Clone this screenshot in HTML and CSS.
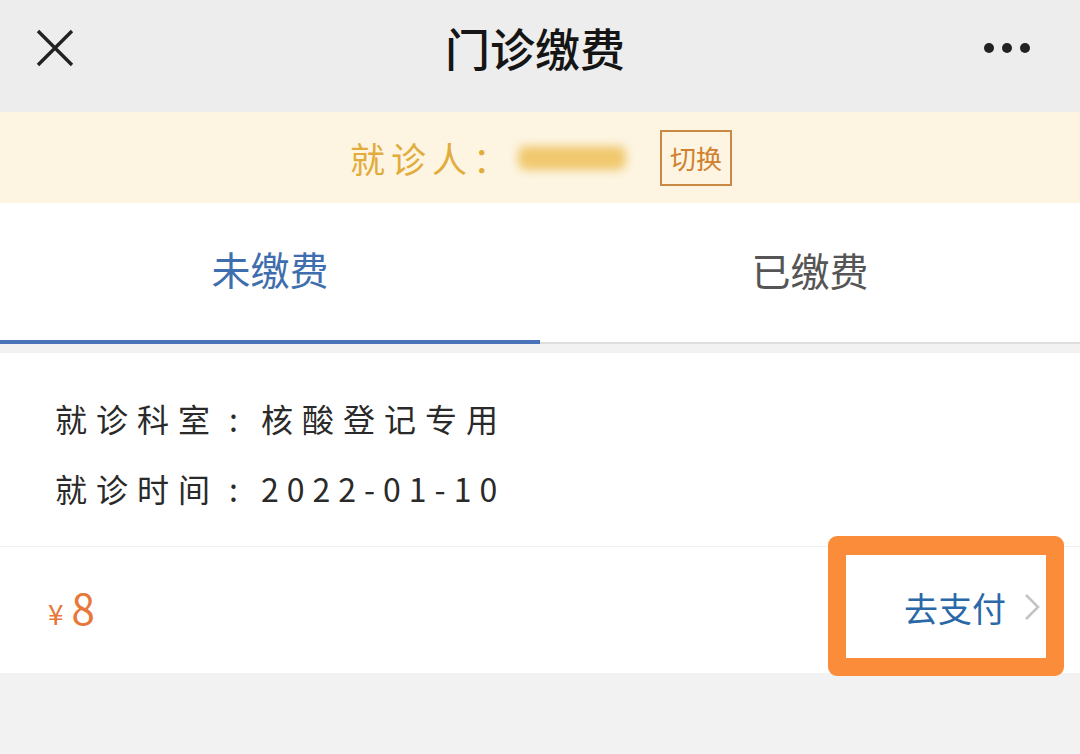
FILE: index.html
```html
<!DOCTYPE html>
<html lang="zh-CN">
<head>
  <meta charset="UTF-8" />
  <title>门诊缴费</title>
  <link rel="stylesheet" href="styles.css">
</head>
<body>

  <!-- top bar -->
  <div class="topbar">
    <svg class="close" width="38" height="38" viewBox="0 0 38 38">
      <path d="M2 2 L36 36 M36 2 L2 36" stroke="#222" stroke-width="3.4" fill="none" />
    </svg>
    <div class="title">门诊缴费</div>
    <div class="more"><span></span><span></span><span></span></div>
  </div>

  <!-- patient -->
  <div class="patient">
    <span class="patient-label">就诊人：</span>
    <span class="patient-name"></span>
    <span class="switch">切换</span>
  </div>

  <!-- tabs -->
  <div class="tabs">
    <div class="tab active">未缴费</div>
    <div class="tab">已缴费</div>
  </div>

  <div class="card">
    <div class="info">
      <div class="row">就诊科室<span class="colon">:</span>核酸登记专用</div>
      <div class="row">就诊时间<span class="colon">:</span><span class="date">2022-01-10</span></div>
    </div>
    <div class="bottom">
      <div class="price"><span class="yen">¥</span>8</div>
      <div class="pay">
        去支付
        <svg width="20" height="30" viewBox="0 0 20 30">
          <path d="M4 3 L16 15 L4 27" stroke="#c4c4c4" stroke-width="2.6" fill="none" />
        </svg>
      </div>
      <div class="mark"></div>
    </div>
  </div>

</body>
</html>
```

FILE: styles.css
```css
body {
  margin: 0;
  font-family: "Noto Sans CJK SC", "Noto Sans", sans-serif;
  background-color: #f2f2f2;
  color: #222;
  width: 1080px;
  height: 754px;
  overflow: hidden;
}

.topbar {
  height: 112px;
  background: #ededed;
  display: flex;
  align-items: center;
  justify-content: space-between;
  padding: 0 50px 0 36px;
  box-sizing: border-box;
}

.close {
  margin-top: -16px;
}

.title {
  font-size: 45px;
  font-weight: 500;
  color: #151515;
  margin-top: -18px;
  margin-left: 12px;
}

.more {
  display: flex;
  gap: 8px;
  margin-top: -16px;
}

.more span {
  width: 10px;
  height: 10px;
  border-radius: 50%;
  background: #222;
}

.patient {
  height: 91px;
  background: #fdf5e2;
  display: flex;
  align-items: center;
  justify-content: center;
  padding-left: 2px;
}

.patient-label {
  font-size: 35px;
  color: #e2ac3c;
  letter-spacing: 6px;
}

.patient-name {
  width: 108px;
  height: 24px;
  margin: 0 34px 0 4px;
  background: #f0c86e;
  border-radius: 8px;
  filter: blur(5px);
}

.switch {
  border: 2px solid #c98a45;
  color: #d0812f;
  font-size: 26px;
  padding: 7px 8px;
  line-height: 38px;
}

.tabs {
  display: flex;
  background: #fff;
  height: 139px;
  border-bottom: 2px solid #dedede;
}

.tab {
  flex: 1;
  display: flex;
  align-items: center;
  justify-content: center;
  font-size: 39px;
  color: #555;
  padding-bottom: 8px;
}

.tab.active {
  color: #3f6eae;
  border-bottom: 4px solid #4a73ba;
  margin-bottom: -2px;
}

.card {
  margin-top: 9px;
  background: #fff;
  height: 320px;
}

.info {
  padding: 30px 0 0 55px;
}

.row {
  font-size: 32px;
  letter-spacing: 9px;
  color: #2a2a2a;
  line-height: 70px;
}

.colon {
  margin: 0 14px 0 10px;
}

.date {
  letter-spacing: 8px;
}

.bottom {
  position: relative;
  display: flex;
  align-items: center;
  justify-content: space-between;
  margin-top: 23px;
  height: 126px;
  border-top: 1px solid #f0f0f0;
}

.price {
  font-size: 42px;
  color: #e8783a;
  padding-left: 48px;
  margin-top: -8px;
}

.yen {
  font-size: 28px;
  margin-right: 8px;
}

.pay {
  display: flex;
  align-items: center;
  gap: 16px;
  font-size: 34px;
  color: #2a68a7;
  padding-right: 38px;
  margin-top: -6px;
}

/* annotation box */
.mark {
  position: absolute;
  left: 828px;
  top: -11px;
  width: 236px;
  height: 140px;
  border: 18px solid #fb8c3a;
  border-top-width: 19px;
  border-radius: 9px;
  box-sizing: border-box;
}
```
